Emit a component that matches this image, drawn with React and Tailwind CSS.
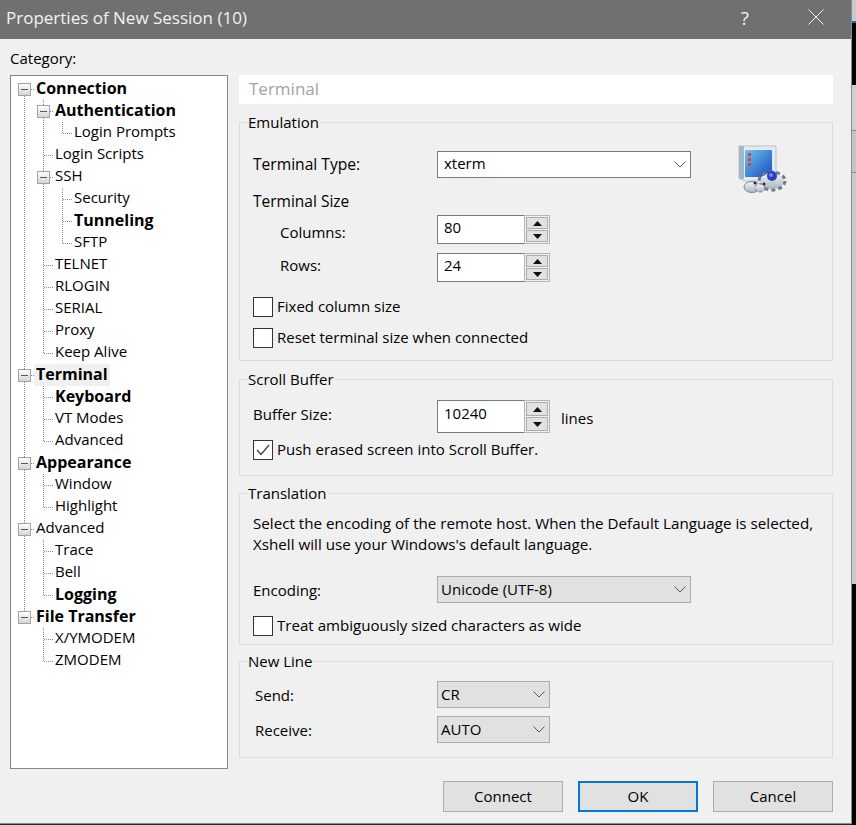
import React from 'react';

const rows = [
  { label: 'Connection', bold: true, cells: [], node: 'first' },
  { label: 'Authentication', bold: true, cells: ['line'], node: 'mid' },
  { label: 'Login Prompts', cells: ['line', 'line', 'ell'] },
  { label: 'Login Scripts', cells: ['line', 'tee'] },
  { label: 'SSH', cells: ['line'], node: 'mid' },
  { label: 'Security', cells: ['line', 'line', 'tee'] },
  { label: 'Tunneling', bold: true, cells: ['line', 'line', 'tee'] },
  { label: 'SFTP', cells: ['line', 'line', 'ell'] },
  { label: 'TELNET', cells: ['line', 'tee'] },
  { label: 'RLOGIN', cells: ['line', 'tee'] },
  { label: 'SERIAL', cells: ['line', 'tee'] },
  { label: 'Proxy', cells: ['line', 'tee'] },
  { label: 'Keep Alive', cells: ['line', 'ell'] },
  { label: 'Terminal', bold: true, cells: [], node: 'mid', selected: true },
  { label: 'Keyboard', bold: true, cells: ['line', 'tee'] },
  { label: 'VT Modes', cells: ['line', 'tee'] },
  { label: 'Advanced', cells: ['line', 'ell'] },
  { label: 'Appearance', bold: true, cells: [], node: 'mid' },
  { label: 'Window', cells: ['line', 'tee'] },
  { label: 'Highlight', cells: ['line', 'ell'] },
  { label: 'Advanced', cells: [], node: 'mid' },
  { label: 'Trace', cells: ['line', 'tee'] },
  { label: 'Bell', cells: ['line', 'tee'] },
  { label: 'Logging', bold: true, cells: ['line', 'ell'] },
  { label: 'File Transfer', bold: true, cells: [], node: 'last' },
  { label: 'X/YMODEM', cells: ['none', 'tee'] },
  { label: 'ZMODEM', cells: ['none', 'ell'] },
];

const Dots = (props) => (
  <line stroke="#8a8a8a" strokeDasharray="1 1" shapeRendering="crispEdges" {...props} />
);

const GuideCell = ({ type }) => (
  <svg width="19" height="22" className="shrink-0 block">
    {(type === 'line' || type === 'tee') && <Dots x1="9.5" y1="0" x2="9.5" y2="22" />}
    {type === 'ell' && <Dots x1="9.5" y1="0" x2="9.5" y2="11" />}
    {(type === 'tee' || type === 'ell') && <Dots x1="10" y1="11.5" x2="19" y2="11.5" />}
  </svg>
);

const NodeCell = ({ node }) => (
  <svg width="19" height="22" className="shrink-0 block">
    <defs>
      <linearGradient id="expander" x1="0" y1="0" x2="0" y2="1">
        <stop offset="0" stopColor="#ffffff" />
        <stop offset="1" stopColor="#d4d4d4" />
      </linearGradient>
    </defs>
    {node !== 'first' && <Dots x1="9.5" y1="0" x2="9.5" y2="5" />}
    {node !== 'last' && <Dots x1="9.5" y1="18" x2="9.5" y2="22" />}
    <Dots x1="16" y1="11.5" x2="19" y2="11.5" />
    <rect x="3.5" y="5.5" width="12" height="12" fill="url(#expander)" stroke="#a3a3a3" />
    <line x1="6" y1="11.5" x2="13" y2="11.5" stroke="#46558f" shapeRendering="crispEdges" />
  </svg>
);

const TreeRow = ({ row }) => (
  <div className="flex h-[22px] items-stretch">
    {row.cells.map((type, i) => (
      <GuideCell key={i} type={type} />
    ))}
    {row.node && <NodeCell node={row.node} />}
    <span
      className={`flex items-center px-[2px] whitespace-nowrap ${row.bold ? 'font-bold text-[16px] pb-[3px]' : 'pb-[5px]'} ${row.selected ? 'bg-[#f0f0f0]' : ''}`}
    >
      {row.label}
    </span>
  </div>
);

const Chevron = () => (
  <svg width="12" height="7" viewBox="0 0 12 7" className="block">
    <polyline points="0.5,0.5 6,6 11.5,0.5" fill="none" stroke="#555555" strokeWidth="1" />
  </svg>
);

const Select = ({ value, width, white }) => (
  <div
    className={`flex h-[27px] items-center justify-between border pr-[4px] ${width} ${
      white ? 'bg-white border-[#7a7a7a] pl-[6px]' : 'bg-[#e1e1e1] border-[#adadad] pl-[3px]'
    }`}
  >
    <span className={white ? 'pb-[3px]' : 'pb-[1px]'}>{value}</span>
    <Chevron />
  </div>
);

const SpinButton = ({ up }) => (
  <div className="flex flex-1 items-center justify-center border border-[#adadad] bg-[#e1e1e1]">
    <svg width="9" height="5" viewBox="0 0 9 5" className="block">
      <polygon points={up ? '4.5,0 9,5 0,5' : '0,0 9,0 4.5,5'} fill="#111111" />
    </svg>
  </div>
);

const Spinner = ({ value, height, textClass }) => (
  <div className={`flex w-[113px] ${height}`}>
    <div className={`flex w-[87px] items-center border border-r-0 border-[#7a7a7a] bg-white pl-[6px] ${textClass}`}>
      {value}
    </div>
    <div className="flex w-[26px] flex-col gap-[1px] border border-[#b5b5b5] p-[1px]">
      <SpinButton up />
      <SpinButton />
    </div>
  </div>
);

const Checkbox = ({ label, checked, className, labelClass }) => (
  <div className={`flex h-[20px] items-center ${className}`}>
    <div className="flex h-[20px] w-[20px] shrink-0 items-center justify-center border border-[#333333] bg-white">
      {checked && (
        <svg width="14" height="12" viewBox="0 0 14 12" className="block">
          <polyline points="1,6 5,10.5 13,1" fill="none" stroke="#444444" strokeWidth="1.4" />
        </svg>
      )}
    </div>
    <span className={`ml-[4px] pb-[3px] whitespace-nowrap ${labelClass || ''}`}>{label}</span>
  </div>
);

const Group = ({ title, height, className, children }) => (
  <div className={`box-border border border-[#dcdcdc] pl-[13px] ${height} ${className}`}>
    <div className="-mt-[12px] -ml-[6px] flex h-[22px] w-fit items-center bg-[#f0f0f0] px-[1px] pb-[1px]">
      {title}
    </div>
    {children}
  </div>
);

const FormRow = ({ label, labelClass, className, children }) => (
  <div className={`flex items-center ${className}`}>
    <span className={`w-[184px] shrink-0 ${labelClass}`}>{label}</span>
    {children}
  </div>
);

const TerminalIcon = () => (
  <svg width="50" height="52" viewBox="0 0 50 52" className="block -mt-[6px] ml-[47px] shrink-0 self-start">
    <defs>
      <linearGradient id="screen" x1="0" y1="0" x2="1" y2="1">
        <stop offset="0" stopColor="#6cc6e6" />
        <stop offset="1" stopColor="#1c49c4" />
      </linearGradient>
      <linearGradient id="gear" x1="0" y1="0" x2="0" y2="1">
        <stop offset="0" stopColor="#f4f6f8" />
        <stop offset="1" stopColor="#aab4be" />
      </linearGradient>
    </defs>
    <path d="M1 1 H38 V36 H6 L1 33 Z" fill="#e6ebf0" stroke="#b4c0cc" />
    <rect x="1" y="1" width="5" height="33" fill="#a5b6c6" />
    <rect x="7" y="5" width="27" height="27" fill="url(#screen)" />
    <rect x="10" y="8" width="3" height="3" fill="#d9423f" />
    <rect x="10" y="13" width="3" height="3" fill="#d9423f" />
    <rect x="10" y="18" width="3" height="3" fill="#d9423f" />
    <ellipse cx="14" cy="42" rx="8" ry="5.5" fill="url(#gear)" stroke="#7f8c99" />
    <ellipse cx="34" cy="36" rx="12" ry="8" fill="url(#gear)" />
    <ellipse cx="34" cy="36" rx="13" ry="9" fill="none" stroke="#6f7c89" strokeWidth="3" strokeDasharray="4 3" />
    <ellipse cx="22" cy="43" rx="5" ry="4" fill="url(#gear)" stroke="#6f7c89" strokeDasharray="3 2" />
    <circle cx="34" cy="31" r="5" fill="#2b3fc6" />
    <circle cx="33" cy="30" r="2" fill="#6d86ee" />
    <circle cx="17" cy="38" r="1.5" fill="#1f2a36" />
    <circle cx="26" cy="39" r="1.5" fill="#1f2a36" />
  </svg>
);

const Button = ({ label, primary }) => (
  <div
    className={`flex h-[31px] w-[120px] items-center justify-center bg-[#e1e1e1] pb-[1px] ${
      primary ? 'border-2 border-[#0078d7]' : 'border border-[#adadad]'
    }`}
  >
    {label}
  </div>
);

export default function App() {
  return (
    <div
      className="flex h-[825px] w-[856px] items-start overflow-hidden bg-[#2b2b2b] text-[15px] leading-[22px] text-black"
      style={{ fontFamily: '"Open Sans", "Noto Sans", sans-serif' }}
    >
      <div className="box-content h-[823px] w-[851px] shrink-0 border-r border-b border-[#8c8c8c] bg-[#f0f0f0]">
        <div className="flex h-[39px] items-center bg-[#707070] pl-[6px] pr-[27px] pb-[4px] text-[17px] text-[#f2f2f2]">
          <span className="flex-1">Properties of New Session (10)</span>
          <span className="mr-[59px] text-[19px]">?</span>
          <svg width="16" height="16" viewBox="0 0 16 16" className="mt-[9px] block self-start">
            <path d="M0.5 0.5 L15.5 15.5 M15.5 0.5 L0.5 15.5" stroke="#f2f2f2" strokeWidth="1" />
          </svg>
        </div>

        <div className="flex h-[36px] items-center pl-[10px] pt-[1px]">Category:</div>

        <div className="flex items-start pl-[10px]">
          <div className="box-border h-[694px] w-[218px] border border-[#828790] bg-white pl-[4px] pt-[2px]">
            {rows.map((row, i) => (
              <TreeRow key={i} row={row} />
            ))}
          </div>

          <div className="ml-[11px] w-[594px]">
            <div className="flex h-[29px] items-center bg-white pl-[10px] pb-[1px] text-[17px] text-[#a3a3a3]">Terminal</div>

            <Group title="Emulation" height="h-[239px]" className="mt-[18px]">
              <FormRow label="Terminal Type:" labelClass="pb-[1px] text-[15.6px]" className="mt-[18px] h-[27px]">
                <Select value="xterm" width="w-[254px]" white />
                <TerminalIcon />
              </FormRow>
              <div className="mt-[13px] flex h-[22px] items-center pb-[3px] text-[15.5px]">Terminal Size</div>
              <FormRow label="Columns:" labelClass="pl-[27px] pt-[5px]" className="mt-[2px] h-[29px]">
                <Spinner value="80" height="h-[29px]" textClass="pb-[6px]" />
              </FormRow>
              <FormRow label="Rows:" labelClass="pl-[27px] pb-[5px]" className="mt-[9px] h-[29px]">
                <Spinner value="24" height="h-[29px]" textClass="pb-[6px]" />
              </FormRow>
              <Checkbox label="Fixed column size" className="mt-[15px]" />
              <Checkbox label="Reset terminal size when connected" className="mt-[11px]" />
            </Group>

            <Group title="Scroll Buffer" height="h-[97px]" className="mt-[18px]">
              <FormRow label="Buffer Size:" labelClass="pb-[5px]" className="mt-[10px] h-[33px]">
                <Spinner value="10240" height="h-[33px]" textClass="pb-[8px]" />
                <span className="ml-[11px] pt-[2px]">lines</span>
              </FormRow>
              <Checkbox label="Push erased screen into Scroll Buffer." checked className="mt-[7px]" />
            </Group>

            <Group title="Translation" height="h-[152px]" className="mt-[17px]">
              <p className="mt-[9px] text-[15.2px] leading-[21px] whitespace-nowrap">
                Select the encoding of the remote host. When the Default Language is selected,
                <br />
                Xshell will use your Windows's default language.
              </p>
              <FormRow label="Encoding:" labelClass="pt-[1px]" className="mt-[21px] h-[27px]">
                <Select value="Unicode (UTF-8)" width="w-[254px]" />
              </FormRow>
              <Checkbox
                label="Treat ambiguously sized characters as wide"
                labelClass="text-[15.1px]"
                className="mt-[13px]"
              />
            </Group>

            <Group title="New Line" height="h-[97px]" className="mt-[16px]">
              <FormRow label="Send:" labelClass="pl-[2px] pt-[1px]" className="mt-[9px] h-[27px]">
                <Select value="CR" width="w-[113px]" />
              </FormRow>
              <FormRow label="Receive:" labelClass="pl-[2px] pt-[1px]" className="mt-[8px] h-[27px]">
                <Select value="AUTO" width="w-[113px]" />
              </FormRow>
            </Group>

            <div className="mt-[23px] flex justify-end gap-[15px]">
              <Button label="Connect" />
              <Button label="OK" primary />
              <Button label="Cancel" />
            </div>
          </div>
        </div>
      </div>

      <div className="h-full flex-1">
        <div className="h-[21px] bg-[#c9c9c9]" />
        <div className="h-[2px] bg-[#0078d7]" />
        <div className="h-[62px] bg-black" />
        <div className="h-[46px] border-b border-[#8a8a8a] bg-[#cfcfcf]" />
        <div className="h-[42px] border-b border-[#8a8a8a] bg-[#c4c4c4]" />
        <div className="h-[411px] bg-[#c9c9c9]" />
        <div className="h-[241px] bg-black" />
      </div>
    </div>
  );
}
